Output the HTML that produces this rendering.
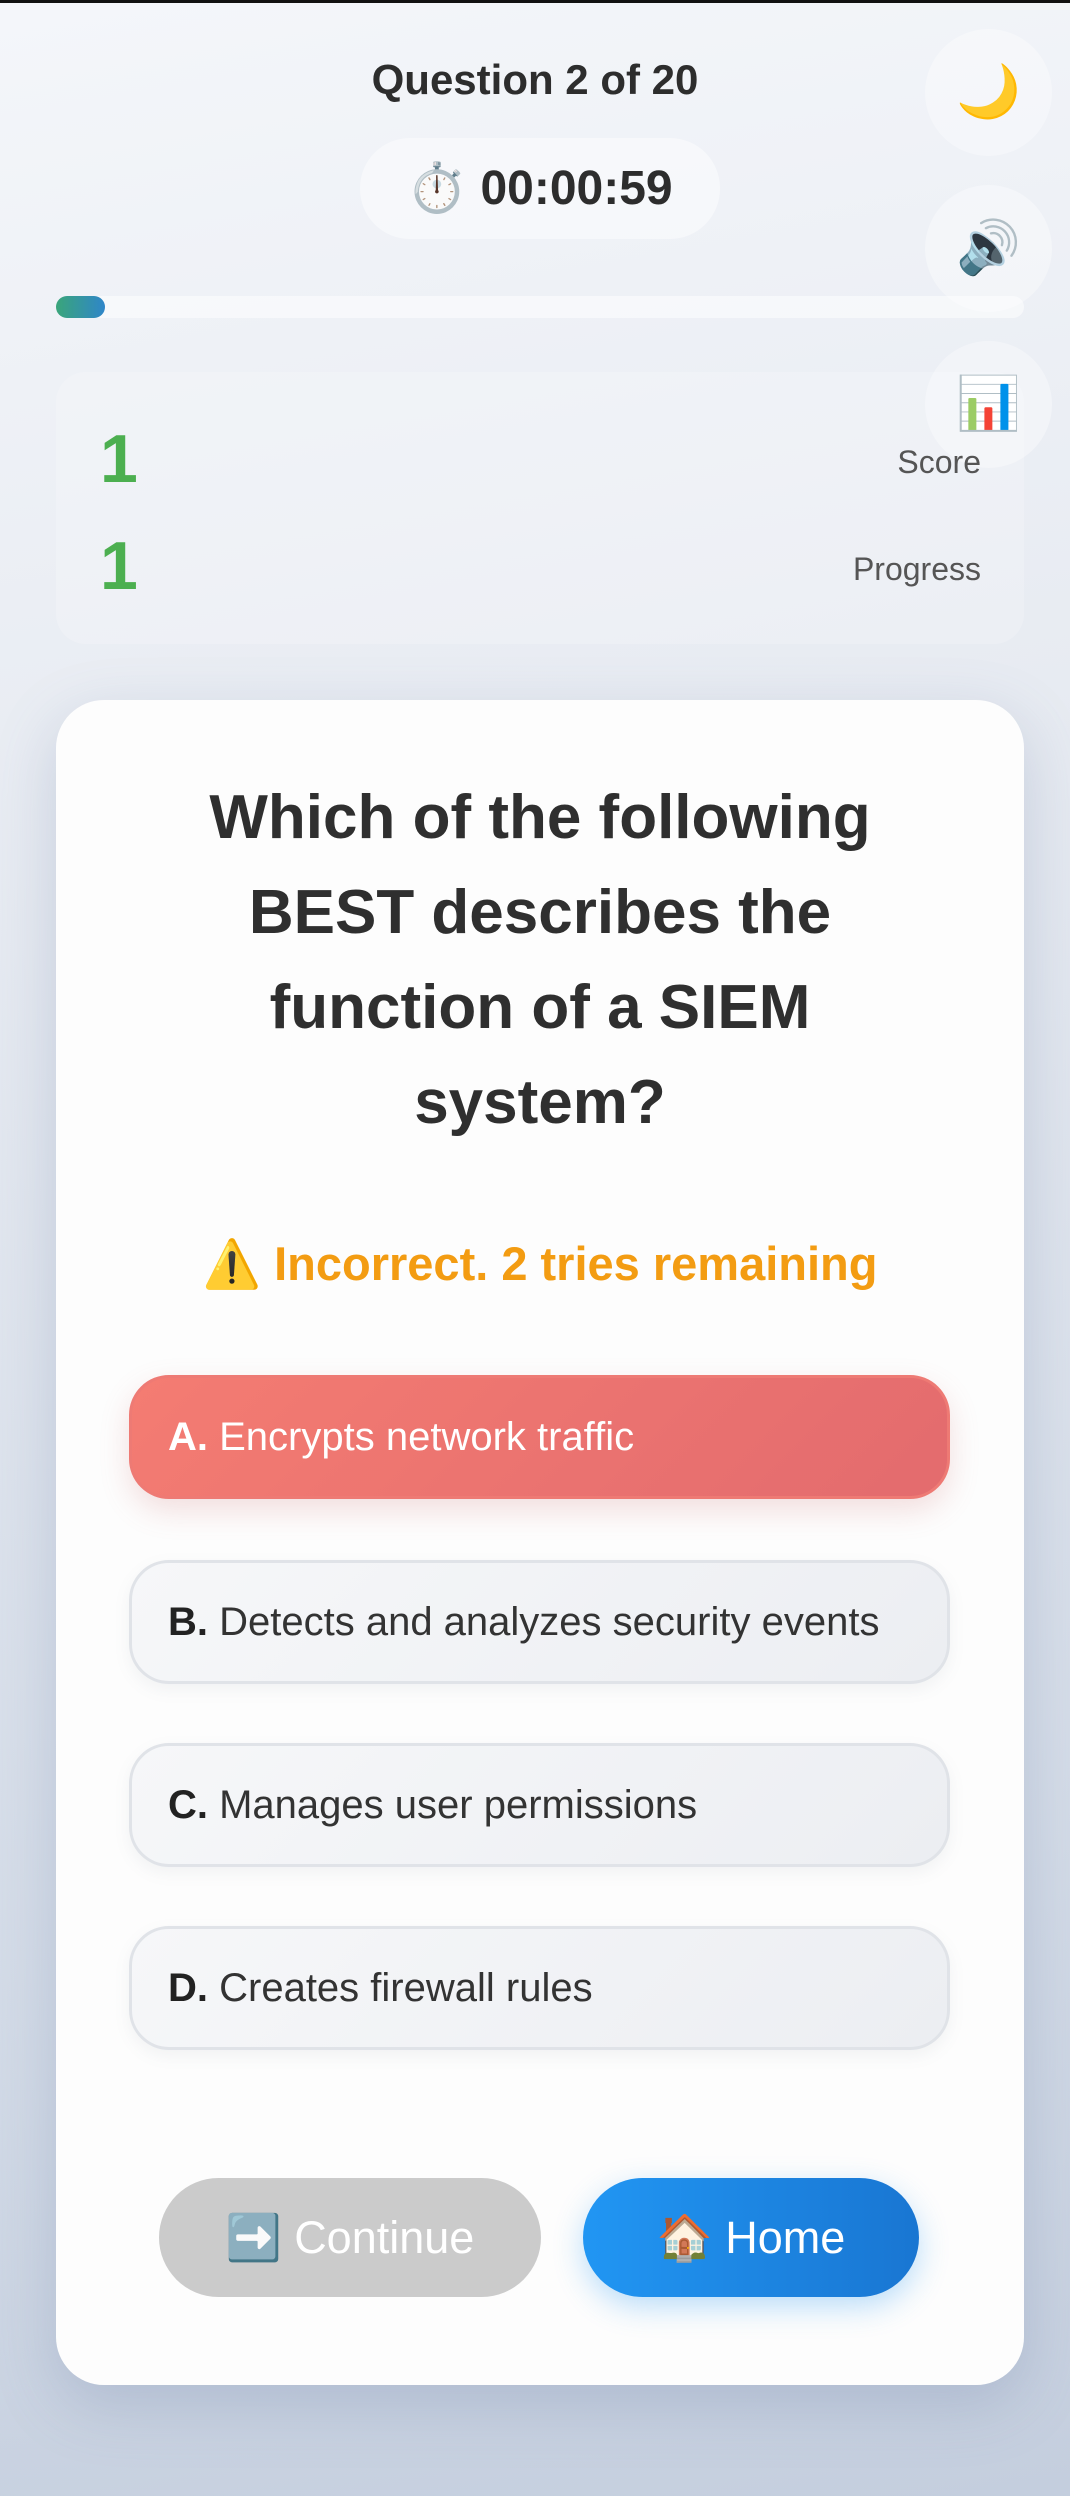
<!DOCTYPE html>
<html><head><meta charset="utf-8"><style>
*{margin:0;padding:0;box-sizing:border-box}
html,body{width:1070px;height:2496px;overflow:hidden}
body{font-family:"Liberation Sans",sans-serif;background:linear-gradient(170deg,#f4f6fa 0%,#e6eaf1 35%,#d3dbe7 75%,#c4cede 100%);position:relative;color:#333}
.abs{position:absolute}
.topbar{left:0;top:0;width:1070px;height:3px;background:#111}
.title{left:0;width:1070px;top:56px;text-align:center;font-weight:bold;font-size:42px;color:#2d2d2d}
.timer{left:360px;top:138px;width:360px;height:101px;border-radius:50px;background:rgba(255,255,255,0.45);text-align:center;line-height:101px;font-weight:bold;font-size:48px;color:#2d2d2d}
.circ{left:925px;width:127px;height:127px;border-radius:50%;background:rgba(255,255,255,0.35);text-align:center;line-height:127px;font-size:52px}
.bar{left:56px;top:296px;width:968px;height:22px;border-radius:11px;background:rgba(255,255,255,0.5)}
.fill{left:56px;top:296px;width:49px;height:22px;border-radius:11px;background:linear-gradient(90deg,#3aa57a,#2f86c9)}
.stats{left:56px;top:372px;width:968px;height:272px;border-radius:30px;background:rgba(255,255,255,0.2)}
.num{left:100px;font-size:68px;font-weight:bold;color:#4caf50}
.lbl{right:89px;font-size:32px;color:#555}
.card{left:56px;top:700px;width:968px;height:1685px;border-radius:48px;background:#fdfdfd;box-shadow:0 20px 60px rgba(100,120,160,0.25)}
.q{left:56px;width:968px;top:770px;text-align:center;font-weight:bold;font-size:62px;line-height:95px;color:#2f2f2f;white-space:nowrap}
.warn{left:56px;width:968px;top:1236px;text-align:center;font-weight:bold;font-size:47px;color:#f39c12;white-space:nowrap}
.opt{left:129px;width:821px;height:124px;border-radius:40px;background:linear-gradient(135deg,#f6f7f9,#eceef2);border:3px solid #e0e3e8;font-size:40px;line-height:118px;padding-left:36px;color:#333;white-space:nowrap;box-shadow:0 6px 16px rgba(100,110,130,0.08)}
.opt b{color:#222}
.optA{background:linear-gradient(135deg,#f47c72,#e36b6e);border-color:#ee7a74;color:#fff;box-shadow:0 12px 30px rgba(200,100,100,0.2)}
.optA b{color:#fff}
.btn{top:2178px;height:119px;border-radius:60px;text-align:center;line-height:119px;font-size:45px;color:#fff}
</style></head><body>
<div class="abs topbar"></div>
<div class="abs title">Question 2 of 20</div>
<div class="abs timer">⏱️ 00:00:59</div>
<div class="abs circ" style="top:29px">🌙</div>
<div class="abs circ" style="top:185px">🔊</div>
<div class="abs bar"></div>
<div class="abs fill"></div>
<div class="abs stats"></div>
<div class="abs circ" style="top:341px">📊</div>
<div class="abs num" style="top:420px">1</div>
<div class="abs lbl" style="top:444px">Score</div>
<div class="abs num" style="top:527px">1</div>
<div class="abs lbl" style="top:551px">Progress</div>
<div class="abs card"></div>
<div class="abs q">Which of the following<br>BEST describes the<br>function of a SIEM<br>system?</div>
<div class="abs warn">⚠️ Incorrect. 2 tries remaining</div>
<div class="abs opt optA" style="top:1375px"><b>A.</b> Encrypts network traffic</div>
<div class="abs opt" style="top:1560px"><b>B.</b> Detects and analyzes security events</div>
<div class="abs opt" style="top:1743px"><b>C.</b> Manages user permissions</div>
<div class="abs opt" style="top:1926px"><b>D.</b> Creates firewall rules</div>
<div class="abs btn" style="left:159px;width:382px;background:#cbcbcb">➡️ Continue</div>
<div class="abs btn" style="left:583px;width:336px;background:linear-gradient(90deg,#2196f3,#1976d2);box-shadow:0 10px 30px rgba(33,150,243,0.3)">🏠 Home</div>
</body></html>
